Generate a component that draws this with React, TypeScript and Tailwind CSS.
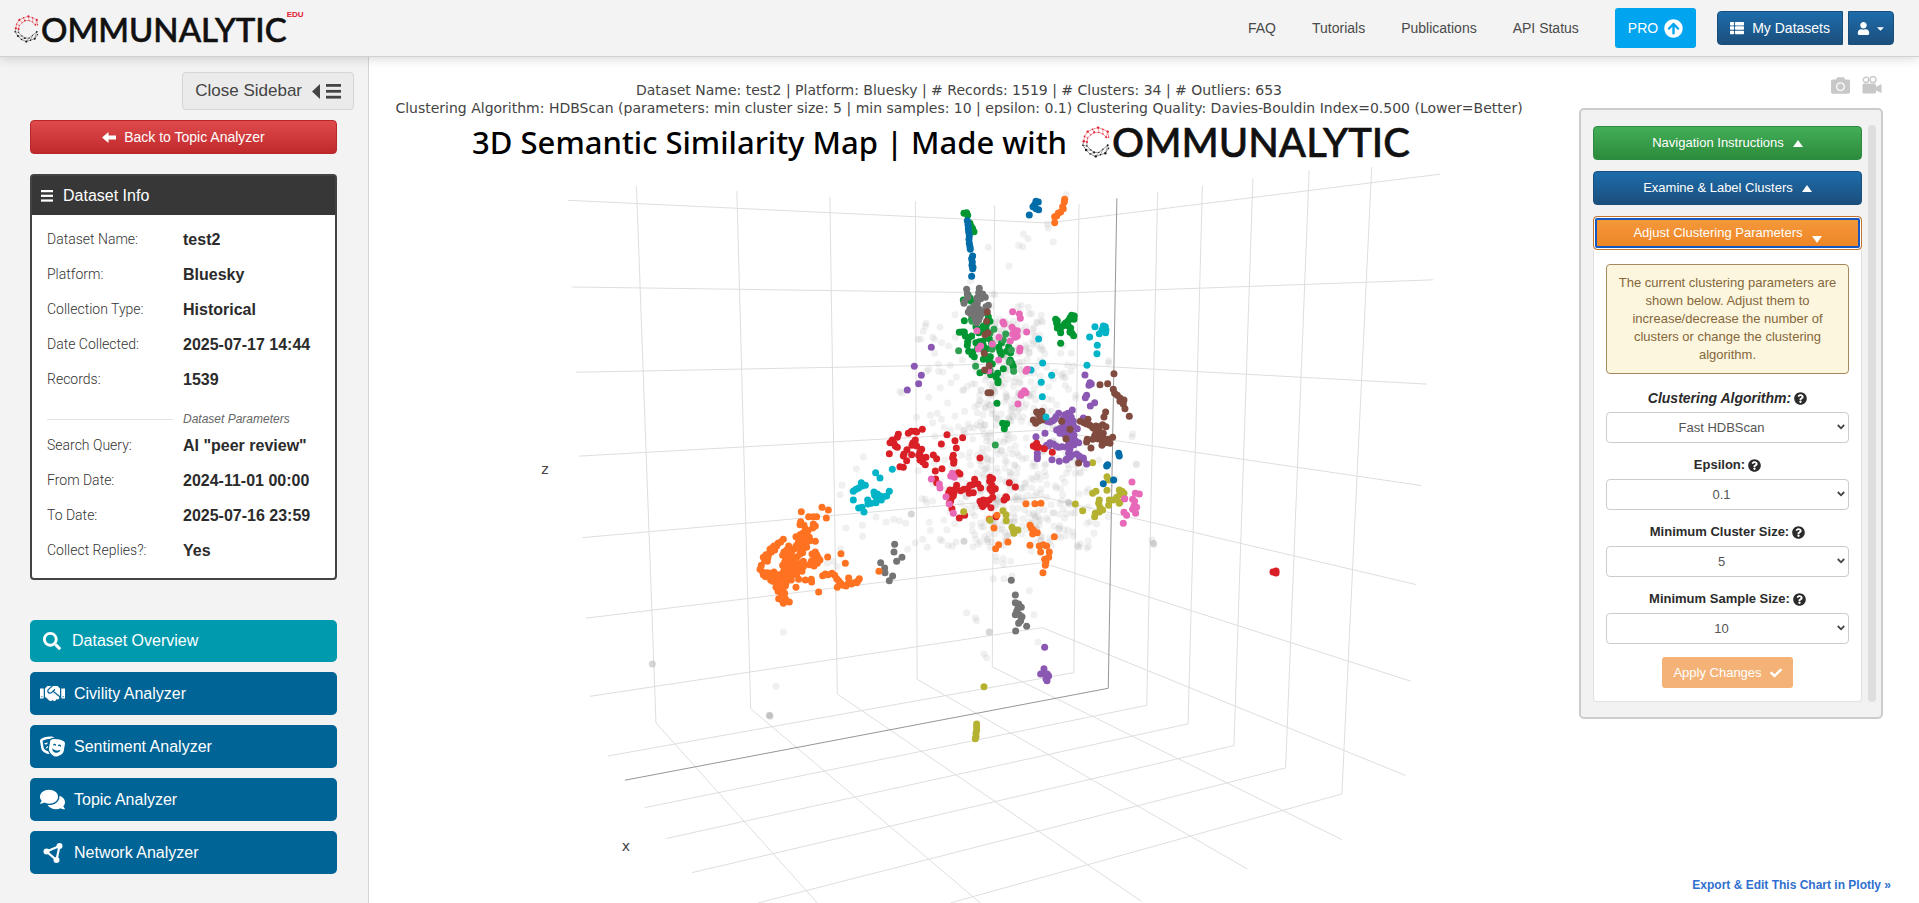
import type { ComponentType, ReactNode } from "react";
import {
  FaHandshake,
  FaTheaterMasks,
  FaComments,
  FaSearch,
  FaThList,
  FaUser,
  FaCamera,
  FaCheck,
  FaQuestionCircle,
  FaArrowCircleUp,
  FaCaretDown,
} from "react-icons/fa";

/* ---------- Logo ---------- */

const RING: [number, number][] = [
  [34, 14], [33, 7], [27, 4], [21, 2], [14, 4], [8, 7], [4, 13], [3, 19],
  [2, 24], [6, 30], [11, 35], [18, 38], [24, 36], [30, 34], [34, 28],
];
const INNER: [number, number][] = [
  [31, 14], [27, 10], [22, 8], [16, 8], [12, 11], [8, 15], [7, 20],
  [7, 25], [12, 30], [16, 33], [22, 33], [27, 29], [33, 24],
];

function RingMark({ className }: { className: string }) {
  const tone = (y: number) => (y < 21 ? "#e02030" : "#1a1a1a");
  return (
    <svg viewBox="0 0 38 40" className={className} aria-hidden="true">
      {RING.slice(1).map(([x, y], i) => (
        <line key={i} x1={RING[i][0]} y1={RING[i][1]} x2={x} y2={y} stroke={tone(y)} strokeWidth="0.6" />
      ))}
      {INNER.slice(1).map(([x, y], i) => (
        <line key={i} x1={INNER[i][0]} y1={INNER[i][1]} x2={x} y2={y} stroke={tone(y)} strokeWidth="0.6" />
      ))}
      {INNER.map(([x, y], i) => (
        <line key={i} x1={RING[i + 1][0]} y1={RING[i + 1][1]} x2={x} y2={y} stroke={tone(y)} strokeWidth="0.5" />
      ))}
      {RING.map(([x, y], i) => (
        <circle key={i} cx={x} cy={y} r={i % 2 ? 1.5 : 1} fill={tone(y)} />
      ))}
      {INNER.map(([x, y], i) => (
        <circle key={i} cx={x} cy={y} r={i % 3 ? 0.8 : 1.3} fill={tone(y)} />
      ))}
    </svg>
  );
}

/* ---------- Plot data ---------- */

const GRID_LINES = [
  "168,55 202,1188 483,1568",
  "343,66 367,1158 767,1568",
  "505,78 518,1127 1048,1565",
  "654,87 657,1096 1232,1496",
  "792,96 788,1070 1398,1435",
  "939,93 930,1082 118,1258",
  "1076,68 1057,1151 182,1367",
  "1154,55 1129,1190 220,1432",
  "1242,39 1209,1236 265,1504",
  "1340,22 1299,1283 380,1568",
  "1449,15 1397,1338 715,1568",
  "48,85 885,133 1568,30",
  "55,268 885,282 1556,253",
  "62,448 880,429 1545,473",
  "68,625 878,570 1535,687",
  "74,797 876,711 1526,896",
  "80,967 875,850 1517,1100",
  "87,1132 875,987 1508,1299",
];

type Series = { color: string; points: string };

const UPPER: Series[] = [
  { color: "#009632", points: "680,158 672,160 683,166 690,190 694,200 702,215 698,206" },
  { color: "#006ca8", points: "682,182 684,194 685,206 686,216 688,228 687,238 688,250 690,260 691,268 698,288 695,296 697,306 696,316 699,322 698,326 695,349 888,124 895,126 884,134 879,140 888,146 896,149 868,165" },
  { color: "#ff7221", points: "974,118 973,126 968,140 970,146 962,156 955,160 944,170 950,168 944,188" },
  { color: "#009632", points: "684,404 690,414 670,420 694,424 673,482 695,478 745,470 750,484 740,492 730,498 738,508 720,508 708,500 716,518 724,514 658,517 666,516 673,516 676,528 686,534 695,528 683,545 682,556 708,548 718,545 728,544 740,534 748,536 730,556 722,566 712,566 686,574 698,576 703,590 696,584 730,598 742,590 751,590 748,604 757,612 720,638 735,632 750,632 752,644 773,640 768,650 774,662 774,668 790,626 816,610 820,620 811,600 785,548 776,562 780,574 784,584 800,574 812,578 806,560 755,550 740,566 771,730 788,790 794,796 800,791 793,806" },
  { color: "#2fa052", points: "656,572 707,619 821,634 808,606 797,522 790,540 814,570 762,508 750,520 756,568 766,855 696,484" },
  { color: "#009632", points: "947,478 952,482 950,490 956,500 952,504 961,508 962,518 968,498 974,492 978,488 985,482 990,474 995,466 1003,468 1002,478 992,504 985,498 990,516 996,520 1001,527 962,550" },
  { color: "#747474", points: "680,388 718,385 682,402 716,398 728,402 736,412 674,424 672,430 684,412 710,415 722,416 712,430 704,436 745,436 738,440 690,446 698,452 685,456 708,448 716,446 722,452 730,458 712,462 700,464 720,470 706,476 710,488 716,480 692,462 724,462" },
  { color: "#00b4c8", points: "1065,500 1090,498 1096,500 1086,510 1098,510 1097,518 1078,521 1049,531 1072,556 1071,581 1041,616 896,537 908,609 935,646 904,667 907,710 873,630" },
  { color: "#e769b8", points: "818,455 838,462 841,475 789,486 792,492 711,512 816,502 822,510 832,512 824,520 832,528 818,522 826,532 860,516 777,532 811,543 757,552 722,558 715,566 840,565 839,573 776,600 862,628 858,634 747,632 853,692 858,698 846,700 843,706 834,732" },
  { color: "#8a58b3", points: "574,562 523,619 544,646 536,671 502,690 1035,645 1050,668 1047,676 1054,672 1040,706 1036,713 1064,728 1051,738 956,760 948,770 938,782 944,778 922,784 930,786 975,764 984,760 997,750 990,766 978,774 984,780 994,772 968,778 1000,784 1030,774 1028,780 1012,806 1002,800 990,792 978,794 968,800 958,806 950,810 962,812 972,808 980,812 990,816 996,820 985,824 972,822 960,820 1002,826 1000,836 990,834 1006,842 1016,848 1002,854 994,846 986,852 980,862 966,860 956,862 948,858 940,852 930,848 926,858 915,820 888,830 920,856 912,864 990,866 986,880 996,884 1010,882 1018,888 1020,896 1030,894 990,892 980,898 892,880 892,890" },
  { color: "#814b3f", points: "742,456 740,484 744,518 735,524 733,580 748,617 734,630 744,698 752,698 1122,641 1103,671 1080,674 1120,688 1124,700 1132,706 1140,714 1152,720 1140,724 1150,732 1155,746 1168,769 1097,756 1092,771 890,756 906,754 896,764 908,768 880,780 906,780 887,790 895,784 965,784 990,808 978,836 1021,784 1032,788 1044,778 1040,792 1050,796 1058,802 1068,798 1060,804 1078,800 1088,794 1098,800 1072,812 1080,816 1090,820 1078,826 1088,832 1068,818 1064,828 1072,836 1058,838 1042,838 1040,846 1084,840 1094,844 1104,838 1118,832 1110,850 1096,848 1086,856 1106,842 1053,864" },
  { color: "#00b4c8", points: "918,771" },
  { color: "#d92027", points: "890,850 880,858 888,862 896,862 913,866 937,877" },
];

const LOWER: Series[] = [
  { color: "#d92027", points: "547,28 526,34 514,34 505,40 530,36 475,43 472,52 457,60 450,68 462,70 466,78 472,82 448,101 526,60 519,68 516,76 526,74 530,78 501,89 515,104 490,108 492,102 500,122 480,140 490,142 545,88 540,96 536,106 544,112 540,120 548,126 556,134 558,112 580,105 590,116 621,44 668,53 645,62 604,72 649,84 640,106 638,114 642,122 641,130 720,114 606,146 586,153 655,158 660,162 587,177 590,188 750,172 758,176 749,184 808,188 826,201 704,178 705,188 714,192 722,204 650,196 648,206 642,210 630,210 626,218 632,224 642,218 634,234 640,228 632,244 628,250 636,266 662,212 672,208 684,206 690,196 698,194 688,220 700,218 756,196 750,206 766,206 756,214 758,232 748,240 740,242 730,240 720,244 724,252 728,260 740,252 753,263 798,230 800,234 792,240 768,290 658,294 674,286" },
  { color: "#e769b8", points: "574,177 637,160 632,168 643,172 598,192 600,204 618,230 628,252 640,280 1176,186 1186,220 1198,222 1154,236 1178,238 1184,244 1182,258 1190,262 1178,268 1187,280 1152,277 1160,286 1150,310" },
  { color: "#00b4c8", points: "457,148 407,158 420,174 364,188 376,196 366,198 356,204 348,208 340,214 340,240 402,216 404,226 412,222 420,228 448,214 440,228 430,230 424,240 408,248 410,236 383,240 394,250 384,252 356,264 366,262 372,276" },
  { color: "#ff7221", points: "246,262 265,270 259,294 184,275 206,290 220,290 230,290 182,305 180,314 192,316 196,326 220,312 226,318 218,324 204,332 200,340 188,340 180,344 168,350 176,358 188,356 198,350 208,352 210,362 226,364 192,366 198,374 186,372 174,370 200,382 188,386 176,384 130,358 122,366 114,370 110,378 102,378 96,384 90,388 104,390 94,396 86,402 78,404 84,412 70,412 74,420 82,424 64,436 60,448 68,456 70,464 76,470 82,458 92,460 102,456 86,470 92,480 98,484 108,468 104,474 116,464 120,472 128,460 130,470 138,466 134,480 142,476 138,490 126,480 118,484 110,490 108,502 114,514 120,502 128,508 136,498 134,520 124,520 116,536 126,540 136,536 148,546 130,550 140,544" },
  { color: "#ff7221", points: "146,378 150,386 140,390 132,396 128,406 136,410 146,400 156,392 164,386 168,378 154,404 160,412 150,414 142,420 134,426 128,436 138,440 146,432 154,424 164,420 172,410 180,402 188,398 168,430 160,438 150,444 140,450 132,450 146,456 156,452 164,446 174,440 182,430 190,424 176,450 186,454 190,440 160,462 152,470 170,464 176,478 168,502 154,480 196,480 214,478 215,486 226,396 216,402 230,404 222,412 234,412 240,420 226,424 214,424 232,430 208,434 222,438 263,411 303,401 316,430 248,467 256,462 264,464 276,460 284,466 290,476 296,482 302,490 292,502 310,496 318,498 326,488 326,474 334,492 342,488 350,488 358,476 354,482 236,516" },
  { color: "#747474", points: "464,373 462,396 486,412 470,424 422,428 434,444 435,458 458,468 448,482 814,481 826,525 826,548 836,552 844,562 834,564 830,574 826,584 838,584 846,590 842,602 836,610 860,619 827,633" },
  { color: "#ff7221", points: "417,454 858,251 885,251 903,250 748,297 771,286 762,324 776,374 767,386 804,366 870,316 874,324 880,330 878,342 892,338 943,350 870,376 898,378 910,374 920,378 902,396 928,396 926,412 914,418 918,426 916,436 909,458" },
  { color: "#b5b232", points: "671,275 750,301 789,272 798,284 799,302 816,322 820,330 834,330 822,340 828,330 1058,128 1101,170 1106,180 1101,211 1138,210 1146,214 1152,220 1140,224 1130,232 1120,240 1108,240 1140,246 1138,250 1106,256 1078,240 1076,250 1080,262 1088,270 1078,276 1066,280 1064,290 1058,220 1068,214 1006,252 1028,272 732,800 710,912 710,920 710,930 708,940 708,950 706,956" },
  { color: "#006ca8", points: "1103,134 1100,138 1136,100 1138,108 1121,180 1090,191" },
  { color: "#8a58b3", points: "1040,132 1030,118 958,124 978,120 936,119 892,116 914,682 912,746 902,762 914,760 922,762 926,768 918,776 921,782" },
  { color: "#814b3f", points: "1016,129" },
  { color: "#e769b8", points: "1154,236" },
];

const OUTLIERS_UPPER =
  "979,104 922,192 925,204 850,222 864,236 836,256 848,260 940,246 745,262 807,318 692,362 758,402 764,404 865,442 834,440 645,464 903,482 908,486 558,490 556,498 550,514 600,502 534,538 542,538 578,532 584,538 605,548 626,558 646,532 584,580 566,628 560,634 596,634 480,694 486,700 500,690 566,712 530,772 571,766 592,760 578,788 604,778 370,890 1178,822 1176,830 1188,912 1106,602 1106,608 994,580 970,556 962,580 992,634 970,640 964,646 946,636 940,656 920,622 868,640 880,550 890,556 886,528 904,560 844,436 1008,706 976,676 986,688";
const OUTLIERS_LOWER =
  "130,637 108,799 680,578 706,594 710,602 882,584 868,512 894,666 732,702 740,713 760,476 816,468 792,476 1236,360 1242,374 349,146 306,196 300,224 336,212 318,324 367,316 368,349 262,430 290,440 280,424 302,386 408,291 438,306 460,298 478,302 497,310 503,388 526,368 548,358 562,382 600,358 606,362 624,376 648,366 1012,376 1016,380 1046,380 1062,340 1000,348 1070,312 1126,176 1190,134 768,410 770,424 790,416 790,432 812,424 546,236 560,248 556,238 984,246 990,254";
const OUTLIERS_DARK = "514,282 672,364 748,636 88,886 90,888 -263,732 986,248 1240,370";

function seeded(seed: number) {
  let s = seed;
  return () => {
    s = (s * 16807) % 2147483647;
    return s / 2147483647;
  };
}

/* Background cloud of unclustered records, widening towards the base. */
function outlierCloud(count: number): [number, number][] {
  const rand = seeded(4211);
  const out: [number, number][] = [];
  for (let i = 0; i < count; i++) {
    const t = Math.pow(rand(), 0.75);
    const spread = (rand() + rand() + rand()) / 1.5 - 1;
    const bend = t > 0.8 ? 1 - (t - 0.8) * 1.6 : 1;
    out.push([
      Math.round(800 + t * 20 + spread * (170 + t * 260) * bend),
      Math.round(450 + t * 700 + (rand() - 0.5) * 60),
    ]);
  }
  return out;
}

const CLOUD = outlierCloud(560);

const parse = (points: string) => points.split(" ").map((p) => p.split(",").map(Number));

function Dots({ color, points, opacity = 1 }: Series & { opacity?: number }) {
  return (
    <g fill={color} fillOpacity={opacity}>
      {parse(points).map(([x, y], i) => (
        <circle key={i} cx={x} cy={y} r="10.5" />
      ))}
    </g>
  );
}

function Scatter() {
  return (
    <svg viewBox="369 166 1180 737" className="block w-full" role="img" aria-label="3D semantic similarity map">
      <g transform="translate(540 160) scale(0.574 0.4738)" fill="none" stroke="#dedede">
        {GRID_LINES.map((points) => (
          <polyline key={points} points={points} vectorEffect="non-scaling-stroke" />
        ))}
        <polyline points="1005,81 990,1115 148,1309" stroke="#969696" vectorEffect="non-scaling-stroke" />
      </g>
      <g transform="translate(740 160) scale(0.3333)">
        <g fill="#b4b4b4" fillOpacity="0.18">
          {CLOUD.map(([x, y], i) => (
            <circle key={i} cx={x} cy={y} r="10.5" />
          ))}
        </g>
        <Dots color="#b4b4b4" opacity={0.2} points={OUTLIERS_UPPER} />
      </g>
      <g transform="translate(740 420) scale(0.3333)">
        <Dots color="#b4b4b4" opacity={0.2} points={OUTLIERS_LOWER} />
        <Dots color="#b4b4b4" opacity={0.55} points={OUTLIERS_DARK} />
      </g>
      <g transform="translate(740 160) scale(0.3333)">
        {UPPER.map((s, i) => (
          <Dots key={i} {...s} />
        ))}
      </g>
      <g transform="translate(740 420) scale(0.3333)">
        {LOWER.map((s, i) => (
          <Dots key={i} {...s} />
        ))}
      </g>
      <g fill="#d92027">
        <circle cx="1273" cy="572" r="3.5" />
        <circle cx="1276" cy="571" r="3.5" />
        <circle cx="1276" cy="573" r="3.5" />
      </g>
      <g fill="#444444" fontSize="14" textAnchor="middle" fontFamily="'DejaVu Sans', sans-serif">
        <text x="545" y="474">z</text>
        <text x="626" y="851">x</text>
      </g>
    </svg>
  );
}

/* ---------- Header ---------- */

function Header() {
  return (
    <header className="relative z-10 flex h-[57px] items-center justify-between border-b border-[#d0d0d0] bg-[#f3f3f3] pr-[25px] pl-[13px] shadow-[0_2px_10px_rgba(0,0,0,0.15)]">
      <a href="#" className="flex items-center pt-[2px] text-[#111]" aria-label="Communalytic EDU">
        <RingMark className="h-[28px] w-[28px]" />
        <span className="font-['Lato',sans-serif] text-[33px] leading-[40px] font-medium [-webkit-text-stroke:0.6px_#111]">
          OMMUNALYTIC
        </span>
        <span className="self-start text-[8px] leading-[12px] font-bold text-[#e02030]">EDU</span>
      </a>
      <div className="flex items-center text-sm">
        <nav className="flex gap-9 text-[#4a4a4a]">
          <a href="#">FAQ</a>
          <a href="#">Tutorials</a>
          <a href="#">Publications</a>
          <a href="#">API Status</a>
        </nav>
        <a href="#" className="ml-9 flex h-10 items-center gap-[6px] rounded-[3px] bg-[#00a4ef] px-[13px] text-white">
          PRO <FaArrowCircleUp className="size-[19px]" />
        </a>
        <button className="ml-[21px] flex h-[34px] items-center gap-2 rounded-l-[4px] border border-[#1a4e7a] bg-linear-to-b from-[#1d6cab] to-[#1b4f7c] px-3 text-white">
          <FaThList className="size-[14px]" /> My Datasets
        </button>
        <button
          aria-label="Account"
          className="ml-[5px] flex h-[34px] items-center gap-[5px] rounded-r-[4px] border border-[#1a4e7a] bg-linear-to-b from-[#1d6cab] to-[#1b4f7c] pr-[7px] pl-2 text-white"
        >
          <FaUser className="size-[13px]" /> <FaCaretDown className="size-[11px]" />
        </button>
      </div>
    </header>
  );
}

/* ---------- Sidebar ---------- */

const INFO: [string, string][] = [
  ["Dataset Name:", "test2"],
  ["Platform:", "Bluesky"],
  ["Collection Type:", "Historical"],
  ["Date Collected:", "2025-07-17 14:44"],
  ["Records:", "1539"],
];
const PARAMS: [string, string][] = [
  ["Search Query:", 'AI "peer review"'],
  ["From Date:", "2024-11-01 00:00"],
  ["To Date:", "2025-07-16 23:59"],
  ["Collect Replies?:", "Yes"],
];

function InfoRow({ label, value }: { label: string; value: string }) {
  return (
    <div className="flex h-[35px] items-center">
      <dt className="w-[136px] font-['Roboto',sans-serif] text-[14px] font-light text-[#333]">{label}</dt>
      <dd className="text-base font-bold text-[#2b2b2b]">{value}</dd>
    </div>
  );
}

function Bars({ className }: { className: string }) {
  return (
    <svg viewBox="0 0 14 14" className={className} fill="currentColor" aria-hidden="true">
      <rect y="0" width="14" height="2.6" />
      <rect y="5.5" width="14" height="2.6" />
      <rect y="11" width="14" height="2.6" />
    </svg>
  );
}

function BackArrow() {
  return (
    <svg viewBox="0 0 14 11" className="h-[11px] w-[14px]" fill="currentColor" aria-hidden="true">
      <path d="M0 5.5 6.5 0v3.6H14v3.8H6.5V11Z" />
    </svg>
  );
}

function NetworkIcon({ className }: { className?: string }) {
  return (
    <svg viewBox="0 0 20 20" className={className} fill="currentColor" stroke="currentColor" aria-hidden="true">
      <path d="M3.5 8.5 16.5 3 13.5 17Z" fill="none" strokeWidth="2.2" />
      <circle cx="3.5" cy="8.5" r="3" stroke="none" />
      <circle cx="16.5" cy="3" r="3" stroke="none" />
      <circle cx="13.5" cy="17" r="3" stroke="none" />
    </svg>
  );
}

const TOOLS: { label: string; icon: ComponentType<{ className?: string }>; size: string }[] = [
  { label: "Civility Analyzer", icon: FaHandshake, size: "size-[25px]" },
  { label: "Sentiment Analyzer", icon: FaTheaterMasks, size: "size-[25px]" },
  { label: "Topic Analyzer", icon: FaComments, size: "size-[25px]" },
  { label: "Network Analyzer", icon: NetworkIcon, size: "size-5" },
];

function Sidebar() {
  return (
    <aside className="flex w-[369px] shrink-0 flex-col border-r border-[#d4d4d4] bg-[#f3f3f3] pt-[15px] pr-[31px] pb-7 pl-[30px]">
      <button className="-mr-[17px] flex h-[38px] items-center self-end rounded-[4px] border border-[#d6d6d6] bg-[#ebebeb] px-3 text-[17px] text-[#444]">
        Close Sidebar
        <svg viewBox="0 0 8 15" className="ml-[10px] h-[15px] w-2" fill="currentColor" aria-hidden="true">
          <path d="M8 0v15L0 7.5Z" />
        </svg>
        <Bars className="ml-[6px] size-[15px]" />
      </button>
      <a
        href="#"
        className="mt-[10px] flex h-[34px] items-center justify-center gap-2 rounded-[4px] border border-[#b9272b] bg-linear-to-b from-[#df4a4c] to-[#c1282c] text-sm text-white"
      >
        <BackArrow /> Back to Topic Analyzer
      </a>

      <section className="mt-5 rounded-[4px] border-2 border-[#444] bg-white">
        <h2 className="flex h-[39px] items-center gap-[10px] bg-[#373737] px-[9px] text-base text-white">
          <Bars className="size-3" /> Dataset Info
        </h2>
        <dl className="px-[15px] pt-[7px] pb-[10px]">
          {INFO.map(([label, value]) => (
            <InfoRow key={label} label={label} value={value} />
          ))}
          <div className="flex h-[31px] items-end">
            <span className="mr-[10px] mb-2 w-[126px] border-t border-[#e2e2e2]" />
            <span className="text-xs leading-[18px] text-[#666] italic">Dataset Parameters</span>
          </div>
          {PARAMS.map(([label, value]) => (
            <InfoRow key={label} label={label} value={value} />
          ))}
        </dl>
      </section>

      <nav className="mt-10 flex flex-col gap-[10px] text-base text-white">
        <a href="#" className="flex h-[42px] items-center rounded-[5px] bg-[#009aaf] pl-[13px]">
          <FaSearch className="mr-[11px] size-[18px]" /> Dataset Overview
        </a>
        {TOOLS.map(({ label, icon: Icon, size }) => (
          <a key={label} href="#" className="flex h-[43px] items-center rounded-[5px] bg-[#006496] pl-[10px]">
            <span className="mr-[9px] flex w-[25px] justify-center">
              <Icon className={size} />
            </span>
            {label}
          </a>
        ))}
      </nav>
    </aside>
  );
}

/* ---------- Control panel ---------- */

function Triangle({ down = false }: { down?: boolean }) {
  return (
    <svg viewBox="0 0 10 7" className={down ? "mt-3 h-[7px] w-[10px]" : "h-[7px] w-[10px]"} fill="currentColor" aria-hidden="true">
      <path d={down ? "M0 0h10L5 7Z" : "M0 7h10L5 0Z"} />
    </svg>
  );
}

function Field({ id, value, children }: { id: string; value: string; children: ReactNode }) {
  return (
    <div className="flex flex-col">
      <label htmlFor={id} className="flex h-[18px] items-center justify-center gap-[3px] text-[13px] font-bold text-[#2b2b2b]">
        {children} <FaQuestionCircle className="size-[13px]" />
      </label>
      <div className="relative mt-[5px]">
        <select
          id={id}
          className="h-[31px] w-full appearance-none rounded-[4px] border border-[#ccc] bg-white pr-3 text-center text-[13px] text-[#555] [text-align-last:center]"
        >
          <option>{value}</option>
        </select>
        <svg viewBox="0 0 8 6" className="pointer-events-none absolute top-3 right-1 h-[6px] w-2" fill="none" stroke="#444" strokeWidth="1.8" aria-hidden="true">
          <path d="M0.8 1 4 4.3 7.2 1" />
        </svg>
      </div>
    </div>
  );
}

function VideoIcon() {
  return (
    <svg viewBox="0 0 20 18" className="h-[18px] w-5" fill="currentColor" aria-hidden="true">
      <circle cx="4" cy="3.8" r="2.7" fill="none" stroke="currentColor" strokeWidth="1.4" />
      <circle cx="11" cy="3.5" r="3" fill="none" stroke="currentColor" strokeWidth="1.4" />
      <rect x="0.5" y="7.5" width="13.5" height="10" rx="1.5" />
      <path d="M13 11.5 19.5 8v9L13 14Z" />
    </svg>
  );
}

const SECTION = "flex h-[34px] w-full items-center justify-center gap-[9px] rounded-[4px] border text-[13px] text-white";

function ControlPanel() {
  return (
    <aside className="flex w-[370px] shrink-0 flex-col pt-[19px] pr-9 pb-[10px] pl-[30px]">
      <div className="flex h-[18px] items-center justify-end gap-3 pr-px text-[#c8c8c8]">
        <button aria-label="Take snapshot">
          <FaCamera className="size-[19px]" />
        </button>
        <button aria-label="Record video">
          <VideoIcon />
        </button>
      </div>
      <div className="mt-[14px] flex gap-[6px] rounded-[5px] border-2 border-[#ccc] bg-[#f2f2f2] pt-[15px] pr-[5px] pb-[15px] pl-3">
        <div className="min-w-0 flex-1 pt-px">
          <button className={`${SECTION} border-[#2f8a41] bg-linear-to-b from-[#43ae58] to-[#2c8b3c]`}>
            Navigation Instructions <Triangle />
          </button>
          <button className={`${SECTION} mt-[11px] border-[#1b4f7c] bg-linear-to-b from-[#1d6cab] to-[#1b4f7c]`}>
            Examine &amp; Label Clusters <Triangle />
          </button>
          <button
            className={`${SECTION} mt-[11px] border-[#c0752f] bg-linear-to-b from-[#f49a3c] to-[#ef8423] shadow-[inset_0_0_0_1px_#fff,inset_0_0_0_3px_#1557c0]`}
          >
            Adjust Clustering Parameters <Triangle down />
          </button>
          <div className="flex flex-col rounded-b-[4px] border border-t-0 border-[#e0e0e0] bg-white px-3 pt-[14px] pb-[13px]">
            <p className="rounded-[4px] border border-[#a58a5f] bg-[#fcf6df] px-[10px] py-[9px] text-center text-[13px] leading-[18px] text-[#85673a]">
              The current clustering parameters are shown below. Adjust them to increase/decrease the number of clusters or change the
              clustering algorithm.
            </p>
            <div className="mt-[15px] flex flex-col gap-[13px]">
              <Field id="algorithm" value="Fast HDBScan">
                <span className="text-sm italic">Clustering Algorithm:</span>
              </Field>
              <Field id="epsilon" value="0.1">Epsilon:</Field>
              <Field id="cluster-size" value="5">Minimum Cluster Size:</Field>
              <Field id="sample-size" value="10">Minimum Sample Size:</Field>
            </div>
            <button className="mt-[13px] flex h-[31px] items-center gap-2 self-center rounded-[3px] bg-[#f5b276] px-[11px] text-[13px] text-white">
              Apply Changes <FaCheck className="size-3" />
            </button>
          </div>
        </div>
        <div className="w-2 rounded-full bg-[#dedede]" />
      </div>
      <a href="#" className="mt-auto -mr-2 self-end text-xs leading-4 font-bold text-[#2f6fd0]">
        Export &amp; Edit This Chart in Plotly »
      </a>
    </aside>
  );
}

/* ---------- Page ---------- */

export default function App() {
  return (
    <div className="flex min-h-screen flex-col bg-white font-['Liberation_Sans',Arial,sans-serif]">
      <Header />
      <div className="flex flex-1">
        <Sidebar />
        <main className="min-w-0 flex-1">
          <div className="flex h-[109px] flex-col items-center pt-6">
            <p className="text-center font-['DejaVu_Sans',sans-serif] text-[14px] leading-[18px] whitespace-nowrap text-[#444]">
              Dataset Name: test2 | Platform: Bluesky | # Records: 1519 | # Clusters: 34 | # Outliers: 653
              <br />
              Clustering Algorithm: HDBScan (parameters: min cluster size: 5 | min samples: 10 | epsilon: 0.1) Clustering Quality:
              Davies-Bouldin Index=0.500 (Lower=Better)
            </p>
            <div className="mt-[5px] flex h-10 items-center pr-9 text-black">
              <h1 className="mr-[14px] font-['Noto_Sans',sans-serif] text-[31px] leading-10 font-medium whitespace-nowrap">
                3D Semantic Similarity Map | Made with
              </h1>
              <RingMark className="h-8 w-[31px]" />
              <span className="font-['Lato',sans-serif] text-[40px] leading-10 font-medium text-[#111] [-webkit-text-stroke:0.6px_#111]">
                OMMUNALYTIC
              </span>
            </div>
          </div>
          <Scatter />
        </main>
        <ControlPanel />
      </div>
    </div>
  );
}
